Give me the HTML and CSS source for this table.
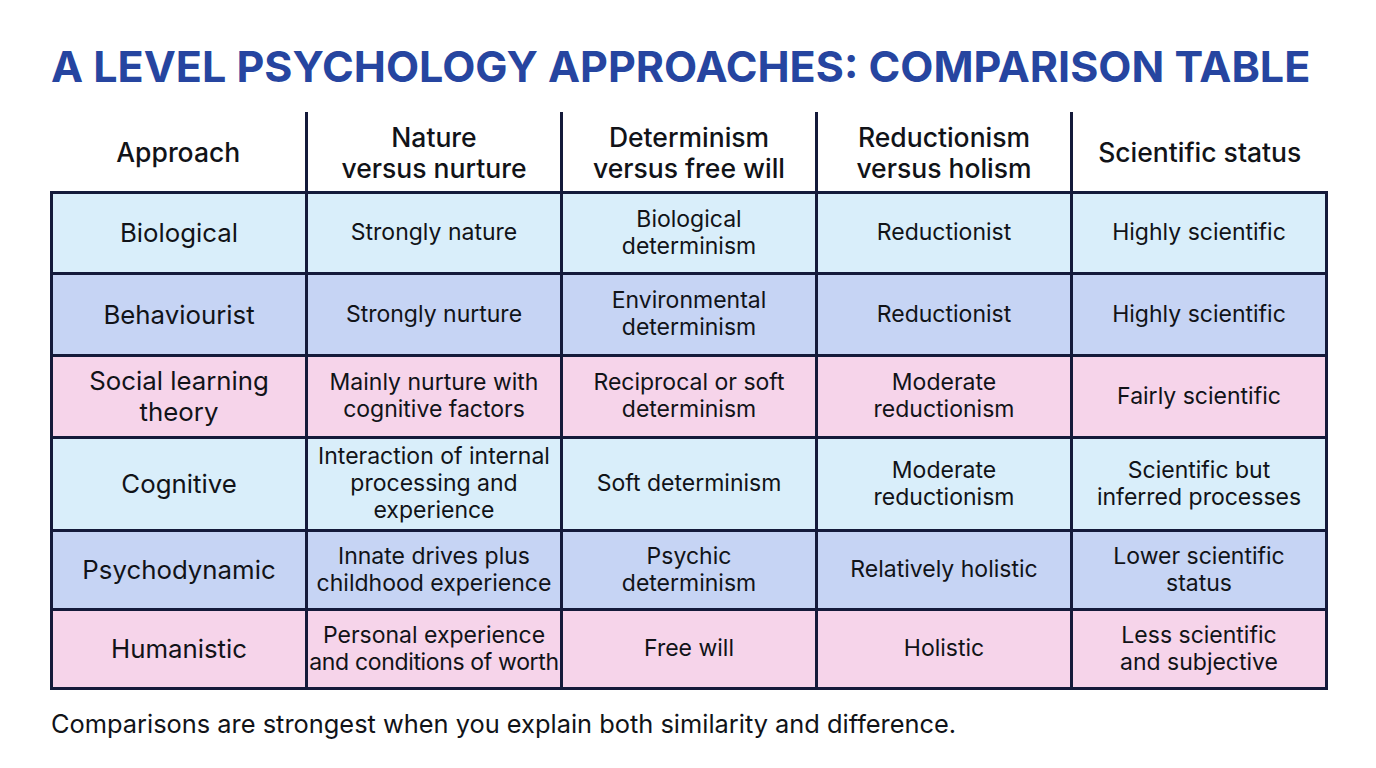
FILE: index.html
```html
<!DOCTYPE html>
<html lang="en">
<head>
<meta charset="utf-8">
<title>A Level Psychology Approaches: Comparison Table</title>
<link rel="stylesheet" href="styles.css">
</head>
<body>
<main class="page">
  <h1 class="title">A LEVEL PSYCHOLOGY APPROACHES: COMPARISON TABLE</h1>
  <table class="cmp">
    <colgroup><col><col><col><col><col></colgroup>
    <thead>
      <tr>
        <th>Approach</th>
        <th>Nature<br>versus nurture</th>
        <th>Determinism<br>versus free will</th>
        <th>Reductionism<br>versus holism</th>
        <th>Scientific status</th>
      </tr>
    </thead>
    <tbody>
      <tr class="r-cyan h81">
        <td class="first">Biological</td>
        <td>Strongly nature</td>
        <td>Biological<br>determinism</td>
        <td>Reductionist</td>
        <td>Highly scientific</td>
      </tr>
      <tr class="r-blue h82">
        <td class="first">Behaviourist</td>
        <td>Strongly nurture</td>
        <td>Environmental<br>determinism</td>
        <td>Reductionist</td>
        <td>Highly scientific</td>
      </tr>
      <tr class="r-pink h82">
        <td class="first">Social learning<br>theory</td>
        <td>Mainly nurture with<br>cognitive factors</td>
        <td>Reciprocal or soft<br>determinism</td>
        <td>Moderate<br>reductionism</td>
        <td>Fairly scientific</td>
      </tr>
      <tr class="r-cyan h93">
        <td class="first">Cognitive</td>
        <td>Interaction of internal<br>processing and<br>experience</td>
        <td>Soft determinism</td>
        <td>Moderate<br>reductionism</td>
        <td>Scientific but<br>inferred processes</td>
      </tr>
      <tr class="r-blue h79">
        <td class="first">Psychodynamic</td>
        <td>Innate drives plus<br>childhood experience</td>
        <td>Psychic<br>determinism</td>
        <td>Relatively holistic</td>
        <td>Lower scientific<br>status</td>
      </tr>
      <tr class="r-pink h79">
        <td class="first">Humanistic</td>
        <td>Personal experience<br><span class="tight">and conditions of worth</span></td>
        <td>Free will</td>
        <td>Holistic</td>
        <td>Less scientific<br>and subjective</td>
      </tr>
    </tbody>
  </table>
  <p class="note">Comparisons are strongest when you explain both similarity and difference.</p>
</main>
</body>
</html>
```
FILE: styles.css
```css
* { box-sizing: border-box; }
html, body { margin: 0; padding: 0; background: #ffffff; }
body {
  font-family: Inter, "Noto Sans", "Liberation Sans", sans-serif;
  color: #111318;
}
.page {
  width: 1376px;
  height: 768px;
  padding: 40px 0 0 51px;
  overflow: hidden;
}
.title {
  margin: 0;
  font-size: 43px;
  line-height: 52px;
  font-weight: 700;
  color: #2645a0;
  letter-spacing: 0;
}
.cmp {
  margin: 20px 0 0 -1px;
  width: 1275px;
  table-layout: fixed;
  border-collapse: collapse;
}
.cmp col { width: 255px; }
.cmp th {
  height: 80px;
  padding: 3px 2px 0;
  font-size: 26.5px;
  line-height: 31px;
  font-weight: 500;
  text-align: center;
  vertical-align: middle;
  color: #111318;
  border-left: 3px solid #141a3a;
  border-bottom: 3px solid #141a3a;
}
.cmp th:first-child { border-left: none; }
.cmp td {
  padding: 0;
  font-size: 23px;
  line-height: 27px;
  text-align: center;
  vertical-align: middle;
  white-space: nowrap;
  border: 3px solid #141a3a;
}
.cmp td .tight { letter-spacing: -0.35px; }
.cmp td.first { font-size: 25.8px; line-height: 31px; }
.r-cyan td { background: #d9eefa; }
.r-blue td { background: #c6d4f4; }
.r-pink td { background: #f6d4ea; }
.h81 { height: 81px; }
.h82 { height: 82px; }
.h93 { height: 93px; }
.h79 { height: 79px; }
.note {
  margin: 19px 0 0;
  font-size: 25.4px;
  line-height: 30px;
  color: #111318;
}
```
